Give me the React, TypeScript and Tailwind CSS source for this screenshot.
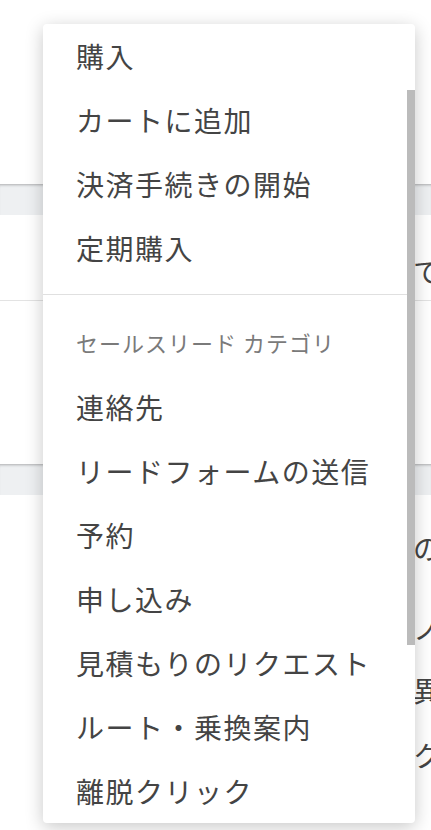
import React from "react";

const font = { fontFamily: '"Noto Sans CJK JP", "Noto Sans", sans-serif' };

const groupA = ["購入", "カートに追加", "決済手続きの開始", "定期購入"];
const groupB = [
  "連絡先",
  "リードフォームの送信",
  "予約",
  "申し込み",
  "見積もりのリクエスト",
  "ルート・乗換案内",
  "離脱クリック",
];

function Item({ label }: { label: string }) {
  return (
    <div className="h-[64px] flex items-center pl-[33px] text-[28px] tracking-[1.5px] text-[#444444] whitespace-nowrap">
      {label}
    </div>
  );
}

function Band() {
  return <div className="h-[31px] bg-[#eef0f2] shadow-[inset_0_3px_3px_-2px_rgba(0,0,0,0.28)]" />;
}

function Frag({ h, text, pt = 0 }: { h: number; text: string; pt?: number }) {
  return (
    <div
      className="flex items-center pl-[413px] text-[28px] text-[#444] whitespace-nowrap"
      style={{ height: h, paddingTop: pt }}
    >
      {text}
    </div>
  );
}

export default function App() {
  return (
    <div className="relative w-[431px] h-[830px] overflow-hidden bg-white" style={font}>
      <div className="flex flex-col">
        <div className="h-[184px]" />
        <Band />
        <div className="h-[249px] flex flex-col">
          <div className="border-b border-[#e3e3e3]">
            <Frag h={85} pt={26} text="て" />
          </div>
        </div>
        <Band />
        <div className="flex flex-col">
          <Frag h={106} text="の" />
          <Frag h={54} text="ノ" />
          <Frag h={70} text="異" />
          <Frag h={60} text="ク" />
        </div>
      </div>

      <div className="absolute left-[43px] top-[24px] w-[372px] bg-white rounded-[4px] shadow-[0_4px_18px_rgba(0,0,0,0.22)] overflow-hidden">
        {groupA.map((l) => (
          <Item key={l} label={l} />
        ))}
        <div className="mt-[14px] h-px bg-[#e0e0e0]" />
        <div className="h-[80px] flex items-center pt-[14px] pl-[33px] text-[22px] tracking-[1px] text-[#7a7a7a] whitespace-nowrap">
          セールスリード カテゴリ
        </div>
        {groupB.map((l) => (
          <Item key={l} label={l} />
        ))}
        <div className="absolute right-0 top-[66px] w-[8px] h-[555px] bg-[#bbbbbb]" />
      </div>
    </div>
  );
}
